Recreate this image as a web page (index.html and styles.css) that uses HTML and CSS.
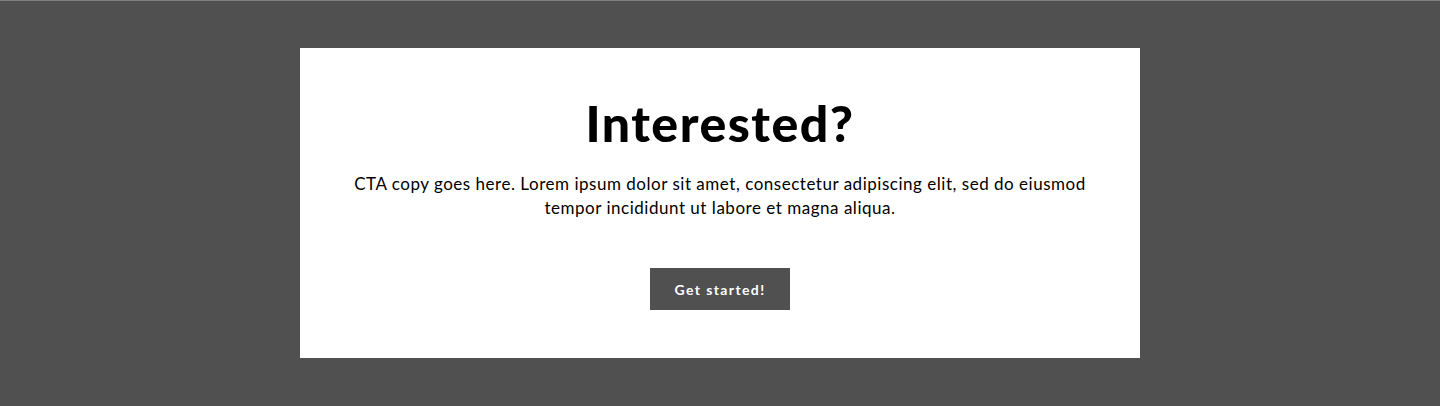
FILE: index.html
```html
<!DOCTYPE html>
<html lang="en">
<head>
<meta charset="utf-8">
<title>Interested?</title>
<link rel="stylesheet" href="styles.css">
</head>
<body>
<main class="page">
  <section class="cta">
    <h1 class="cta-title">Interested?</h1>
    <p class="cta-copy">CTA copy goes here. Lorem ipsum dolor sit amet, consectetur adipiscing elit, sed do eiusmod tempor incididunt ut labore et magna aliqua.</p>
    <a class="cta-button" href="#">Get started!</a>
  </section>
</main>
</body>
</html>
```

FILE: styles.css
```css
html, body {
  margin: 0;
  padding: 0;
}
body {
  background: #505050;
  border-top: 1px solid #7e7e7e;
  height: 405px;
  font-family: "Lato", "Noto Sans", sans-serif;
  color: #000;
}
.page {
  display: flex;
  justify-content: center;
  padding-top: 47px;
}
.cta {
  width: 840px;
  height: 310px;
  box-sizing: border-box;
  background: #fff;
  display: flex;
  flex-direction: column;
  align-items: center;
  padding: 35px 40px 0;
}
.cta-title {
  margin: 0;
  font-size: 50px;
  font-weight: 900;
  line-height: 80px;
  letter-spacing: 1.5px;
}
.cta-copy {
  margin: 9px 0 0;
  font-size: 17px;
  line-height: 24px;
  text-align: center;
  letter-spacing: 0.52px;
}
.cta-button {
  margin-top: 48px;
  width: 140px;
  height: 42px;
  display: flex;
  align-items: center;
  justify-content: center;
  background: #505050;
  color: #fff;
  text-decoration: none;
  font-size: 14px;
  font-weight: 700;
  letter-spacing: 1.4px;
}
```
